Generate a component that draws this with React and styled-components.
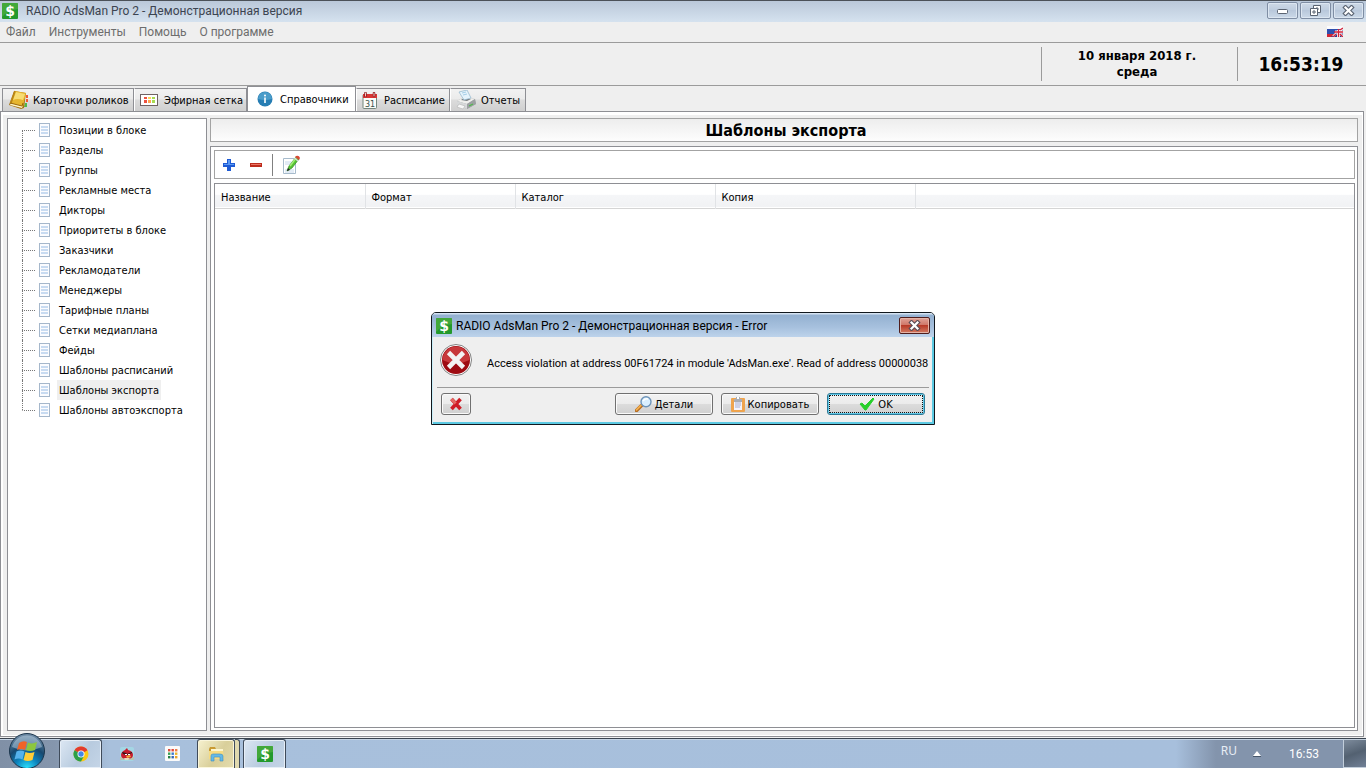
import React from 'react';
import styled, { createGlobalStyle, css } from 'styled-components';

const ui = '"DejaVu Sans Condensed", "DejaVu Sans", sans-serif';
const segoe = 'Roboto, "Noto Sans", sans-serif';
const line = '#8e8f94';

const sections = [
  'Позиции в блоке',
  'Разделы',
  'Группы',
  'Рекламные места',
  'Дикторы',
  'Приоритеты в блоке',
  'Заказчики',
  'Рекламодатели',
  'Менеджеры',
  'Тарифные планы',
  'Сетки медиаплана',
  'Фейды',
  'Шаблоны расписаний',
  'Шаблоны экспорта',
  'Шаблоны автоэкспорта',
];

const GlobalStyle = createGlobalStyle`
  * {
    box-sizing: border-box;
  }
  body {
    margin: 0;
    overflow: hidden;
    background: #efefef;
    color: #000;
    font: 11px/16px ${ui};
  }
  button {
    margin: 0;
    padding: 0;
    border: 0;
    background: none;
    color: inherit;
    font: inherit;
    white-space: nowrap;
  }
  svg {
    display: block;
    flex: none;
  }
`;

const Screen = styled.div`
  display: flex;
  flex-direction: column;
  height: 100vh;
`;

const TitleBar = styled.header`
  display: flex;
  align-items: center;
  height: 22px;
  padding: 0 2px 2px;
  gap: 8px;
  border-top: 1px solid #4b5158;
  background: linear-gradient(#bac8d9, #d5e2ef);
  color: #3c4450;
  font: 12px/16px ${segoe};
`;

const Caption = styled.h1`
  flex: 1;
  margin: 0;
  font: inherit;
`;

const WindowControls = styled.div`
  display: flex;
  gap: 2px;
`;

const WindowButton = styled.button`
  display: flex;
  align-items: center;
  justify-content: center;
  width: 31px;
  height: 17px;
  border: 1px solid #7f8ea4;
  border-radius: 2px;
  background: linear-gradient(#ced9e6, #bdccde 50%, #b9c8db 50%, #cbd9e8);
  box-shadow: inset 0 0 0 1px #dce6f1;
`;

const MenuBar = styled.nav`
  display: flex;
  align-items: center;
  height: 21px;
  padding: 0 23px 0 6px;
  gap: 13px;
  border-bottom: 1px solid #9b9b9b;
  color: #6d6d6d;
  font: 12px/16px ${segoe};
`;

const LanguageButton = styled.button`
  margin-left: auto;
  padding-bottom: 2px;
`;

const InfoBar = styled.section`
  display: flex;
  align-items: center;
  justify-content: flex-end;
  height: 43px;
  border-bottom: 1px solid #9b9b9b;
  font-weight: bold;
`;

const Today = styled.div`
  width: 197px;
  padding: 1px 5px 1px 0;
  border: solid #9b9b9b;
  border-width: 0 1px;
  font-size: 13px;
  line-height: 16px;
  text-align: center;
`;

const Clock = styled.time`
  width: 128px;
  padding-right: 2px;
  font-size: 19px;
  line-height: 24px;
  text-align: center;
`;

const TabStrip = styled.div`
  display: flex;
  align-items: flex-end;
  height: 26px;
  padding-left: 2px;
`;

const Tab = styled.button`
  display: flex;
  align-items: center;
  gap: ${({ $gap }) => $gap || 4}px;
  width: ${({ $width }) => $width}px;
  height: 24px;
  padding-left: 5px;
  border: 1px solid ${line};
  border-left-color: ${({ $first }) => ($first ? line : '#fff')};
  background: linear-gradient(#f2f2f2, #ebebeb 45%, #dcdcdc 50%, #cfcfcf);
  ${({ $active }) =>
    $active &&
    css`
      height: 26px;
      padding-left: 9px;
      border-color: ${line};
      border-bottom-color: #fff;
      background: #fff;
    `}
`;

const Label = styled.span`
  padding-top: 2px;
`;

const Page = styled.main`
  flex: 1;
  display: flex;
  min-height: 0;
  margin: -1px 2px 1px 0;
  padding: 3px 1px 1px 2px;
  border: 1px solid ${line};
  background: #fff;
`;

const PageBody = styled.div`
  flex: 1;
  display: flex;
  min-width: 0;
  gap: 3px;
  padding: 3px 4px 4px;
  background: #efefef;
`;

const TreePanel = styled.aside`
  width: 200px;
  border: 1px solid ${line};
  background: #fff;
`;

const Tree = styled.ul`
  margin: 0;
  padding: 1px 0 0 14px;
  list-style: none;
`;

const TreeItem = styled.li`
  display: flex;
  align-items: center;
  height: 20px;

  &:first-child i::before,
  &:last-child i::after {
    border-left-color: transparent;
  }
`;

const Branch = styled.i`
  display: flex;
  flex-direction: column;
  align-self: stretch;
  width: 13px;
  margin-right: 4px;

  &::before,
  &::after {
    content: '';
    flex: 1;
    border-left: 1px dotted #777;
  }
  &::after {
    border-top: 1px dotted #777;
  }
`;

const TreeButton = styled.button`
  height: 20px;
  margin-left: 7px;
  padding: 1px 2px 0;
  background: ${({ $selected }) => ($selected ? '#efefef' : 'transparent')};
`;

const Content = styled.div`
  flex: 1;
  display: flex;
  flex-direction: column;
  min-width: 0;
  gap: 4px;
`;

const SectionTitle = styled.h2`
  height: 24px;
  margin: 0;
  padding: 1px 0 0 4px;
  border: 1px solid #a3a3a3;
  background: linear-gradient(#ededed, #fdfdfd);
  font: bold 16px/21px ${ui};
  text-align: center;
`;

const Frame = styled.section`
  flex: 1;
  display: flex;
  flex-direction: column;
  gap: 4px;
  padding: 3px 2px 2px 3px;
  border: 1px solid ${line};
  background: #fff;
`;

const Toolbar = styled.div`
  display: flex;
  align-items: center;
  gap: 5px;
  height: 29px;
  padding-left: 3px;
  border: 1px solid #a3a3a3;
`;

const ToolButton = styled.button`
  display: flex;
  align-items: center;
  justify-content: center;
  width: ${({ $wide }) => ($wide ? 26 : 22)}px;
  height: 22px;
`;

const Separator = styled.span`
  width: 1px;
  height: 22px;
  background: #808080;
`;

const ListView = styled.div`
  flex: 1;
  border: 1px solid ${line};
`;

const Table = styled.table`
  width: 100%;
  border-collapse: collapse;
  table-layout: fixed;
`;

const HeadRow = styled.tr`
  height: 24px;
  border-bottom: 1px solid #d5d5d5;
  background: linear-gradient(#fff, #fff 45%, #f5f6f8 50%, #f1f2f4);
`;

const HeadCell = styled.th`
  width: ${({ $width }) => ($width ? `${$width}px` : 'auto')};
  padding: 4px 6px 0;
  border-right: ${({ $width }) => ($width ? '1px solid #e1e3e6' : 0)};
  font-weight: normal;
  text-align: left;
`;

const Overlay = styled.div`
  position: absolute;
  inset: 0 0 31px;
  display: flex;
  align-items: center;
  justify-content: center;
`;

const Dialog = styled.section`
  width: 504px;
  border: 1px solid #10171d;
  border-radius: 5px 5px 0 0;
  background: #efefef;
  box-shadow: inset 1px 0 #c9eef8, inset -2px -2px #5cc9e2;
  overflow: hidden;
`;

const DialogTitle = styled.header`
  display: flex;
  align-items: center;
  gap: 4px;
  height: 24px;
  padding: 1px 4px 0;
  background: linear-gradient(#d5e3f2 1px, #93b0d0 2px, #a7c1de 60%, #bdd3eb);
  font: 12px/16px ${segoe};
`;

const DialogClose = styled.button`
  display: flex;
  align-items: center;
  justify-content: center;
  width: 31px;
  height: 17px;
  border: 1px solid #501d1c;
  border-radius: 2px;
  background: linear-gradient(#e0a297, #cf7566 48%, #b83a28 50%, #d37b62);
  box-shadow: inset 0 0 0 1px #e5b3a6;
`;

const Message = styled.div`
  display: flex;
  align-items: center;
  gap: 15px;
  height: 51px;
  margin: 0 5px;
  padding: 0 0 4px 3px;
  border-bottom: 1px solid #9b9b9b;
`;

const MessageText = styled.p`
  margin: 0;
  padding-top: 8px;
  font-family: ${segoe};
  white-space: nowrap;
`;

const Actions = styled.footer`
  display: flex;
  gap: 8px;
  padding: 5px 9px 9px;
`;

const ActionButton = styled.button`
  display: flex;
  align-items: center;
  justify-content: center;
  gap: 3px;
  width: ${({ $small }) => ($small ? 30 : 98)}px;
  height: 22px;
  margin-right: ${({ $small }) => ($small ? 'auto' : 0)};
  border: 1px solid #707070;
  border-radius: 3px;
  background: linear-gradient(#f2f2f2, #ebebeb 50%, #dcdcdc 50%, #d0d0d0);
  box-shadow: inset 0 0 0 1px #fafafa;
  ${({ $primary }) =>
    $primary &&
    css`
      border-color: #2c7996;
      outline: 1px dotted #111;
      outline-offset: -3px;
      box-shadow: inset 0 0 0 1px #5fc8e8;
    `}
`;

const Taskbar = styled.footer`
  display: flex;
  align-items: stretch;
  height: 30px;
  border-top: 1px solid #39434f;
  background: linear-gradient(
    90deg,
    #8090a6,
    #8596ad 55px,
    #a8c0dc 110px,
    #a7bfdc calc(100% - 190px),
    #8394ac calc(100% - 150px)
  );
  box-shadow: inset 0 1px #c5d4e4;
`;

const StartButton = styled.button`
  height: 36px;
  margin: -7px 13px 0 8px;
`;

const TaskButton = styled.button`
  display: flex;
  align-items: center;
  justify-content: center;
  width: 43px;
  margin-right: ${({ $gap }) => $gap || 0}px;
  ${({ $open }) =>
    $open &&
    css`
      border: 1px solid #3f4b5a;
      border-bottom: 0;
      border-radius: 3px 3px 0 0;
      background: linear-gradient(125deg, #dce7f3, #b8cbdf 55%, #c5d5e7);
      box-shadow: inset 0 0 0 1px #e6eef7;
    `}
  ${({ $folder }) =>
    $folder &&
    css`
      width: 38px;
      background: linear-gradient(125deg, #f7f2d0, #d9cf9a 55%, #e4dcae);
      box-shadow: inset 0 0 0 1px #faf6dc;
    `}
`;

const TaskStack = styled.span`
  width: 5px;
  margin-right: 3px;
  border: 1px solid #3f4b5a;
  border-width: 1px 1px 0 0;
  border-radius: 0 3px 0 0;
  background: #e0d9ae;
`;

const Tray = styled.div`
  display: flex;
  align-items: center;
  margin-left: auto;
  padding-right: 24px;
  color: #fff;
  font: 12px/16px "Noto Sans", sans-serif;
`;

const TrayLanguage = styled.span`
  margin-right: 16px;
  padding-bottom: 6px;
  color: #e7edf4;
`;

const TrayTime = styled.time`
  margin-left: 28px;
  font-family: ${segoe};
`;

const ShowDesktop = styled.button`
  width: 23px;
  border: 1px solid #c2cedb;
  border-right: 0;
  background: linear-gradient(160deg, #7d8b9c, #536171 50%, #718096);
`;

const Dollar = ({ title }) => (
  <svg width="16" height="16" viewBox="0 0 16 16" role="img" aria-label={title}>
    <rect width="16" height="16" rx="1" fill="#23992c" />
    <path d="M0 0h16v6Q6 7 0 14z" fill="#57b345" opacity=".6" />
    <text x="8" y="13" textAnchor="middle" fill="#fff" fontFamily="DejaVu Sans" fontWeight="bold" fontSize="14">
      $
    </text>
  </svg>
);

const Cross = ({ dark }) => (
  <svg width="13" height="11" viewBox="0 0 13 11">
    <path d="M3.500 2.500l6 6M9.500 2.500l-6 6" stroke={dark} strokeWidth="4.400" strokeLinecap="square" />
    <path d="M3.500 2.500l6 6M9.500 2.500l-6 6" stroke="#fff" strokeWidth="2.200" strokeLinecap="square" />
  </svg>
);

const Flags = () => (
  <svg width="16" height="11" viewBox="0 0 16 11">
    <path d="M0 0h16v4H0z" fill="#fbfbfd" />
    <path d="M0 3h16v5H0z" fill="#2e4fae" />
    <path d="M0 8h16v3H0z" fill="#cf2535" />
    <path d="M16 2v9H4z" fill="#28408f" />
    <path d="M6 10.500l3-3M16 10.500l-3-3M16 2l-3 3" stroke="#fff" strokeWidth="2" />
    <path d="M8 6h8M11.500 4v7" stroke="#fff" strokeWidth="3" />
    <path d="M7 6h9M11.500 3v8M6 11l3-3M16 11l-3-3M16 2l-3 2" stroke="#d3233a" strokeWidth="1.400" />
  </svg>
);

const Book = () => (
  <svg width="21" height="20" viewBox="0 0 21 20">
    <path d="M18 5h2v3h-2zM18 9h2v3h-2z" fill="#f05b32" />
    <path d="M17 13h2v4h-3z" fill="#50b848" />
    <path d="M6 1l12 2-2 15-3 1L1 15l1-3z" fill="#a87410" />
    <path d="M3 13l12 2-1 3L2 15z" fill="#fff6c8" />
    <path d="M7 1l11 2-3 13-13-3z" fill="#e6b52e" />
    <path d="M8 2l9 2-2 6Q9 8 5 10z" fill="#f7dc74" />
    <path d="M7 1L3 13" stroke="#b88416" strokeWidth="1.500" />
    <path d="M2 13l12 3 1-3" fill="none" stroke="#986508" />
  </svg>
);

const Grid = () => (
  <svg width="18" height="12" viewBox="0 0 18 12">
    <rect x=".5" y=".5" width="17" height="11" fill="#fff" stroke="#6f6262" />
    {['#ed5140', '#ffa64f', '#a6dc50'].map((color, i) => (
      <path key={color} d={`M${4 + i * 4} 3h3v2h-3zm0 3h3v3h-3z`} fill={color} />
    ))}
    <path d="M8 3h3v2H8z" fill="#ffd45c" />
  </svg>
);

const Info = () => (
  <svg width="16" height="16" viewBox="0 0 16 16">
    <circle cx="8" cy="8" r="7.500" fill="#267db3" />
    <path d="M1 8a7 7 0 0 1 14 0Q8 10 1 8z" fill="#4b9dca" />
    <circle cx="8" cy="4.500" r="1" fill="#fff" />
    <path d="M7.200 6.500h1.600V12H7.200z" fill="#fff" />
  </svg>
);

const Calendar = () => (
  <svg width="16" height="17" viewBox="0 0 16 17">
    <rect x="1" y="2.500" width="13.500" height="14" rx="1" fill="#fbfcf9" stroke="#74877d" />
    <path d="M1 2h14v4H1z" fill="#d93534" />
    <path d="M3.500 1v3M12 1v3" stroke="#8d1d20" strokeWidth="2.500" strokeLinecap="round" />
    <path d="M3.500 1v3M12 1v3" stroke="#f7c5c0" strokeLinecap="round" />
    <text x="8" y="14.500" textAnchor="middle" fill="#38514a" fontFamily="DejaVu Sans" fontSize="8">
      31
    </text>
  </svg>
);

const Printer = () => (
  <svg width="21" height="20" viewBox="0 0 21 20">
    <path d="M1 11l7-4 11 2 1 5-9 5L1 15z" fill="#a6a9ac" />
    <path d="M1 11l7-4 11 2-8 5z" fill="#efefed" />
    <path d="M1 11l10 3v5L1 15z" fill="#d6d8d9" />
    <path d="M5 10l3-2 7 1-4 2z" fill="#777b7e" />
    <path d="M3 2l8-2 4 8-7 2z" fill="#e5f3fc" stroke="#8fb4cc" strokeWidth=".7" />
    <path d="M6 3l4-1M7 5l4-1" stroke="#a5cee7" />
    <path d="M11 14v5l9-5-1-5z" fill="#9da0a2" />
    <path d="M3 14l6 2-2 3-6-2z" fill="#f7f7f7" stroke="#aaa" strokeWidth=".5" />
    <path d="M13 16l4-2" stroke="#50b94c" strokeWidth="1.300" />
  </svg>
);

const Doc = () => (
  <svg width="11" height="14" viewBox="0 0 11 14">
    <rect x=".5" y=".5" width="10" height="13" fill="#fbfcff" stroke="#a5b7cb" />
    <path d="M2 3h7v2H2zM2 6h7v2H2zM2 9h7v2H2z" fill="#c8dbf1" />
  </svg>
);

const Plus = () => (
  <svg width="12" height="12" viewBox="0 0 12 12">
    <path d="M4 0h4v4h4v4H8v4H4V8H0V4h4z" fill="#1f5bd4" />
    <path d="M5 1h2v4h4v1H1V5h4z" fill="#5b9af4" />
  </svg>
);

const Minus = () => (
  <svg width="12" height="4" viewBox="0 0 12 4">
    <path d="M0 0h12v4H0z" fill="#bd2c1d" />
    <path d="M1 1h10v1H1z" fill="#ec7666" />
  </svg>
);

const Edit = () => (
  <svg width="18" height="20" viewBox="0 0 18 20">
    <path d="M1.500 3.500h12v15h-12z" fill="#fff" stroke="#a7bbcc" />
    <path d="M3 7h8M3 9h7M3 15h9M3 17h9" stroke="#c6d8ec" />
    <path d="M5 16l2-5 7-9 3 2-7 9z" fill="#55c332" stroke="#348a26" strokeWidth=".7" />
    <path d="M8 11l6-8" stroke="#a1ee76" strokeWidth="1.500" />
    <path d="M5 16l1-3 2 2z" fill="#222" />
    <path d="M13 2l1-1q3-1 4 2l-1 2z" fill="#d94934" />
    <path d="M12.500 3l3.500 3" stroke="#d5d8dd" strokeWidth="1.500" />
  </svg>
);

const ErrorIcon = () => (
  <svg width="32" height="32" viewBox="0 0 32 32">
    <circle cx="16" cy="16" r="15.500" fill="#fff" stroke="#828282" />
    <circle cx="16" cy="16" r="14" fill="#9e0b12" />
    <path d="M2.500 16a13.500 13.500 0 0 1 27 0Q16 23 2.500 16z" fill="#c7383b" />
    <path d="M8.500 8.500l15 15M23.500 8.500l-15 15" stroke="#f3f3f3" strokeWidth="4.600" />
  </svg>
);

const RedCross = () => (
  <svg width="14" height="14" viewBox="0 0 14 14">
    <path d="M2.500 2l9 10M11.500 2l-9 10" stroke="#cf1c26" strokeWidth="3.600" />
    <path d="M2.500 2l4 4.500" stroke="#e46a64" strokeWidth="3" />
  </svg>
);

const Magnifier = () => (
  <svg width="17" height="16" viewBox="0 0 17 16">
    <path d="M1.500 14.500l5-5" stroke="#b56c22" strokeWidth="3.500" strokeLinecap="round" />
    <path d="M1.500 13.800l4.500-4.500" stroke="#f4b04e" strokeWidth="1.800" strokeLinecap="round" />
    <circle cx="11" cy="5.800" r="5" fill="#d9efff" stroke="#6d93b8" strokeWidth="1.400" />
    <path d="M8 5q2-3 5-2" fill="none" stroke="#fff" strokeWidth="1.500" />
  </svg>
);

const Clipboard = () => (
  <svg width="14" height="16" viewBox="0 0 14 16">
    <rect y="2" width="14" height="14" rx="1" fill="#efa44e" />
    <path d="M3 4h8v10H3z" fill="#f4f3fb" />
    <path d="M4 7h6M4 9h6M4 11h5" stroke="#a6aed0" />
    <path d="M3 3h2V1h4v2h2v3H3z" fill="#a9adb5" />
    <path d="M6 1h2v2H6z" fill="#fff" />
  </svg>
);

const Check = () => (
  <svg width="16" height="14" viewBox="0 0 16 14">
    <path d="M1 7l2-1 3 3 8-8 1 1-8 11H6z" fill="#27cf2b" stroke="#27cf2b" strokeLinejoin="round" />
  </svg>
);

const StartOrb = () => (
  <svg width="38" height="38" viewBox="0 0 38 38">
    <defs>
      <radialGradient id="orb" cx=".5" cy="1" r=".95">
        <stop offset="0" stopColor="#2ee5ff" />
        <stop offset=".35" stopColor="#0c83bd" />
        <stop offset=".65" stopColor="#174970" />
        <stop offset="1" stopColor="#6d8aa5" />
      </radialGradient>
    </defs>
    <circle cx="19" cy="19" r="17.500" fill="url(#orb)" stroke="#1b354c" />
    <path d="M4 15a15.500 15.500 0 0 1 30 0Q19 22 4 15z" fill="#c7dcea" opacity=".45" />
    <path d="M11 11q4-3 8-1l-2 8q-4-2-8 0z" fill="#ef6328" />
    <path d="M20 10.500q4 2 9-.5l-2 8q-5 2-9 0z" fill="#8cc63e" />
    <path d="M8.500 19.500q4-2 8 0l-2 8q-4-2-8 0z" fill="#55b2ec" />
    <path d="M17.500 20q4 2 9 0l-2 8q-5 2-9 0z" fill="#ffcd37" />
  </svg>
);

const Chrome = () => (
  <svg width="16" height="16" viewBox="0 0 16 16">
    <circle cx="8" cy="8" r="7.500" fill="#fbc816" />
    <path d="M8 8L1.500 4.200a7.500 7.500 0 0 1 13 0z" fill="#e33b2e" />
    <path d="M8 8L1.500 4.200A7.500 7.500 0 0 0 8 15.500L11 10z" fill="#2c9f48" />
    <circle cx="8" cy="8" r="3.500" fill="#fff" />
    <circle cx="8" cy="8" r="2.700" fill="#4387e8" />
  </svg>
);

const Bird = () => (
  <svg width="14" height="14" viewBox="0 0 14 14">
    <rect width="14" height="14" rx="2" fill="#a4d6e4" />
    <path d="M0 10h14v3H0z" fill="#b7c4b0" />
    <path d="M7 1l1 2q5 1 5 5 0 4-6 4T1 8q0-3 4-5z" fill="#c71d2e" />
    <path d="M2 5l4 1 1 1 5-2v1L7 8 3 7z" fill="#2b1717" />
    <path d="M5 7h2v1H5zM8 7h2v1H8z" fill="#fff" />
    <path d="M6 9l4-1 1 2-4 1z" fill="#f2a93a" />
    <path d="M4 11h6l-2 2H5z" fill="#ead8bd" />
  </svg>
);

const appColors = ['#d94a3c', '#e2473b', '#ef7b45', '#3aa257', '#3979cf', '#ecb52b', '#267f46', '#3566b7', '#eba428'];

const Apps = () => (
  <svg width="15" height="15" viewBox="0 0 15 15">
    <rect width="15" height="15" rx="1" fill="#fafafa" />
    {appColors.map((color, i) => (
      <rect key={color} x={3 + (i % 3) * 3.5} y={3 + Math.floor(i / 3) * 3.5} width="2.400" height="2.400" fill={color} />
    ))}
  </svg>
);

const Folder = () => (
  <svg width="17" height="15" viewBox="0 0 17 15">
    <path d="M1 2l1-2h5l1 2h7v10H1z" fill="#c99a32" />
    <path d="M3 2h12v5H3z" fill="#fdf6cf" />
    <path d="M1 4h14l1 8H1z" fill="#f6db82" />
    <path d="M3 14V9q0-2 2-2h7q3 0 3 2v5h-3v-4H6v4z" fill="#65b9e5" stroke="#3c8fc0" strokeWidth=".6" />
  </svg>
);

function App() {
  return (
    <Screen>
      <GlobalStyle />
      <TitleBar>
        <Dollar title="AdsMan" />
        <Caption>RADIO AdsMan Pro 2 - Демонстрационная версия</Caption>
        <WindowControls>
          <WindowButton aria-label="Свернуть">
            <svg width="12" height="6" viewBox="0 0 12 6">
              <rect x=".5" y="1.500" width="10" height="4" rx="1" fill="#fff" stroke="#5b6472" />
            </svg>
          </WindowButton>
          <WindowButton aria-label="Восстановить">
            <svg width="13" height="12" viewBox="0 0 13 12">
              <path d="M4.500.5h7v7h-7zM7 3h2v2H7z" fill="#fff" stroke="#5b6472" />
              <path d="M1.500 3.500h7v7h-7zM4 6h2v2H4z" fill="#fff" stroke="#5b6472" />
            </svg>
          </WindowButton>
          <WindowButton aria-label="Закрыть">
            <Cross dark="#5b6472" />
          </WindowButton>
        </WindowControls>
      </TitleBar>
      <MenuBar>
        <button>Файл</button>
        <button>Инструменты</button>
        <button>Помощь</button>
        <button>О программе</button>
        <LanguageButton aria-label="Язык">
          <Flags />
        </LanguageButton>
      </MenuBar>
      <InfoBar>
        <Today>
          10 января 2018 г.
          <br />
          среда
        </Today>
        <Clock>16:53:19</Clock>
      </InfoBar>
      <TabStrip role="tablist">
        <Tab role="tab" $width={132} $first>
          <Book />
          <Label>Карточки роликов</Label>
        </Tab>
        <Tab role="tab" $width={113} $gap={6}>
          <Grid />
          <Label>Эфирная сетка</Label>
        </Tab>
        <Tab role="tab" aria-selected="true" $width={109} $gap={7} $active>
          <Info />
          <Label>Справочники</Label>
        </Tab>
        <Tab role="tab" $width={94} $gap={6}>
          <Calendar />
          <Label>Расписание</Label>
        </Tab>
        <Tab role="tab" $width={76}>
          <Printer />
          <Label>Отчеты</Label>
        </Tab>
      </TabStrip>
      <Page>
        <PageBody>
          <TreePanel>
            <Tree>
              {sections.map((name) => (
                <TreeItem key={name}>
                  <Branch />
                  <Doc />
                  <TreeButton $selected={name === 'Шаблоны экспорта'}>{name}</TreeButton>
                </TreeItem>
              ))}
            </Tree>
          </TreePanel>
          <Content>
            <SectionTitle>Шаблоны экспорта</SectionTitle>
            <Frame>
              <Toolbar>
                <ToolButton aria-label="Добавить">
                  <Plus />
                </ToolButton>
                <ToolButton aria-label="Удалить">
                  <Minus />
                </ToolButton>
                <Separator />
                <ToolButton aria-label="Изменить" $wide>
                  <Edit />
                </ToolButton>
              </Toolbar>
              <ListView>
                <Table>
                  <thead>
                    <HeadRow>
                      <HeadCell $width={150}>Название</HeadCell>
                      <HeadCell $width={150}>Формат</HeadCell>
                      <HeadCell $width={200}>Каталог</HeadCell>
                      <HeadCell $width={200}>Копия</HeadCell>
                      <HeadCell />
                    </HeadRow>
                  </thead>
                </Table>
              </ListView>
            </Frame>
          </Content>
        </PageBody>
      </Page>
      <Taskbar>
        <StartButton aria-label="Пуск">
          <StartOrb />
        </StartButton>
        <TaskButton aria-label="Chrome" $open $gap={3}>
          <Chrome />
        </TaskButton>
        <TaskButton aria-label="Angry Birds" $gap={3}>
          <Bird />
        </TaskButton>
        <TaskButton aria-label="Приложения" $gap={3}>
          <Apps />
        </TaskButton>
        <TaskButton aria-label="Проводник" $open $folder>
          <Folder />
        </TaskButton>
        <TaskStack />
        <TaskButton aria-label="AdsMan" $open>
          <Dollar title="AdsMan" />
        </TaskButton>
        <Tray>
          <TrayLanguage>RU</TrayLanguage>
          <svg width="8" height="6" viewBox="0 0 8 6">
            <path d="M4 0l4 5H0z" fill="#fff" />
            <path d="M0 5.500h8" stroke="#46566b" />
          </svg>
          <TrayTime>16:53</TrayTime>
        </Tray>
        <ShowDesktop aria-label="Свернуть все окна" />
      </Taskbar>
      <Overlay>
        <Dialog role="dialog" aria-labelledby="error-title">
          <DialogTitle>
            <Dollar title="AdsMan" />
            <Caption id="error-title">RADIO AdsMan Pro 2 - Демонстрационная версия - Error</Caption>
            <DialogClose aria-label="Закрыть">
              <Cross dark="#5c4e57" />
            </DialogClose>
          </DialogTitle>
          <Message>
            <ErrorIcon />
            <MessageText>
              Access violation at address 00F61724 in module 'AdsMan.exe'. Read of address 00000038
            </MessageText>
          </Message>
          <Actions>
            <ActionButton aria-label="Завершить" $small>
              <RedCross />
            </ActionButton>
            <ActionButton>
              <Magnifier />
              <Label>Детали</Label>
            </ActionButton>
            <ActionButton>
              <Clipboard />
              <Label>Копировать</Label>
            </ActionButton>
            <ActionButton $primary>
              <Check />
              <Label>OK</Label>
            </ActionButton>
          </Actions>
        </Dialog>
      </Overlay>
    </Screen>
  );
}

export default App;
